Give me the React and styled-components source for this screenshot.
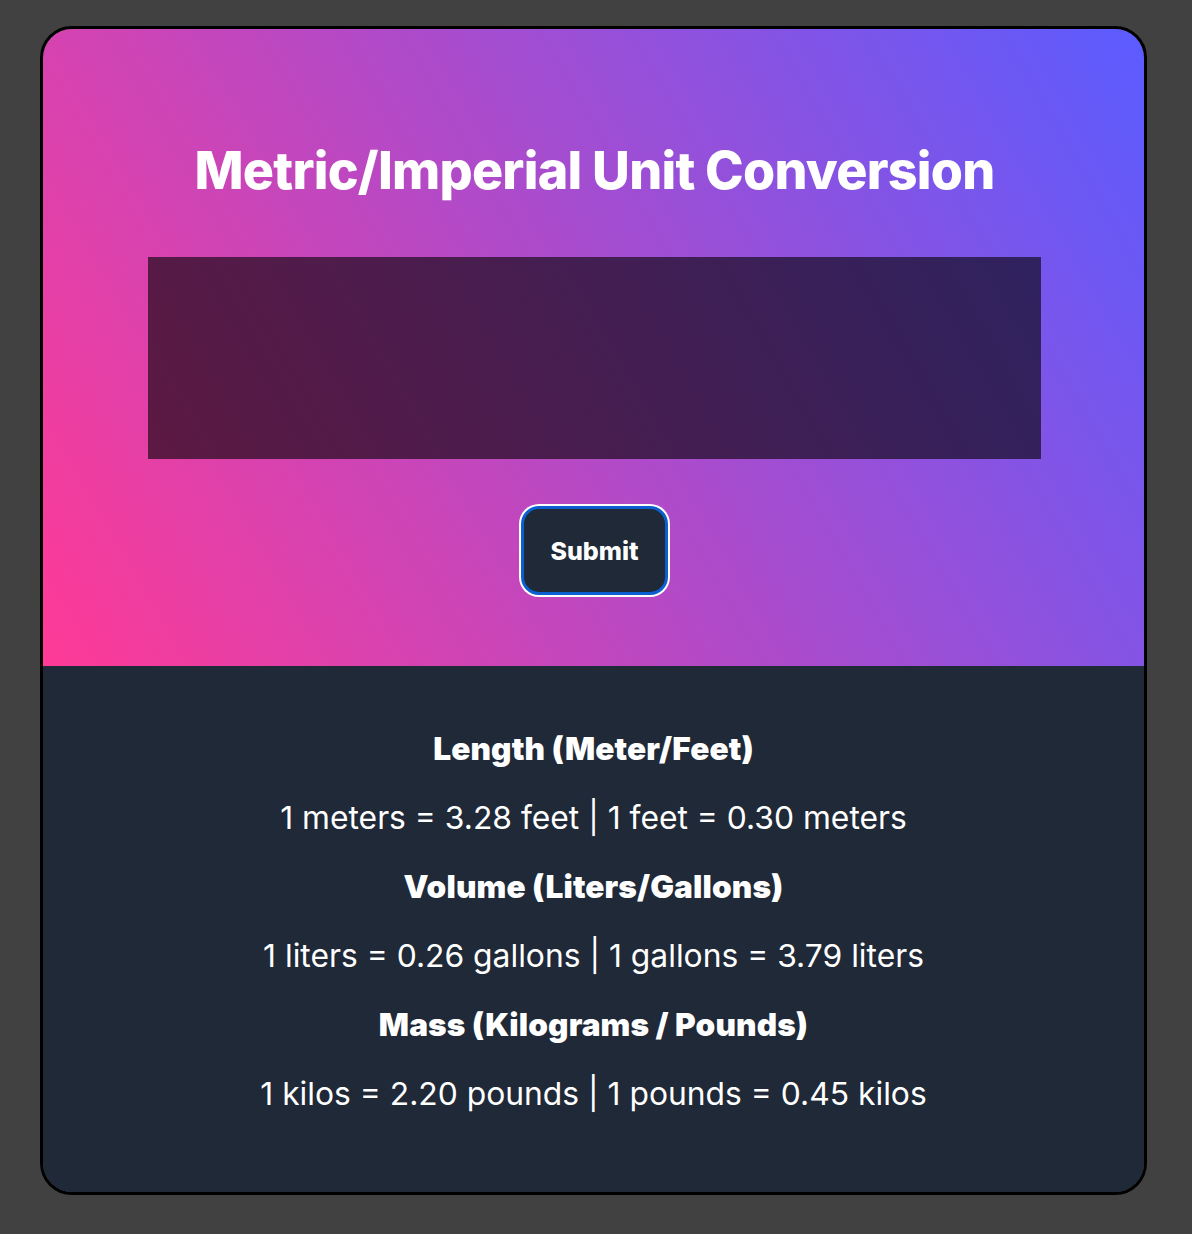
import React from "react";
import styled, { createGlobalStyle } from "styled-components";

const Global = createGlobalStyle`
  html, body { margin: 0; padding: 0; background: #414141; }
  body { font-family: Inter, "Noto Sans", sans-serif; }
  * { box-sizing: border-box; }
`;

const Page = styled.div`
  padding: 26px 45px 39px 40px;
  min-height: 1234px;
`;

const Card = styled.div`
  width: 1107px;
  border: 3px solid #000;
  border-radius: 32px;
  overflow: hidden;
  display: flex;
  flex-direction: column;
`;

const Top = styled.section`
  background: linear-gradient(60deg, #ff3a96 0%, #5b5cff 100%);
  display: flex;
  flex-direction: column;
  align-items: center;
  padding: 112px 103px 71px 105px;
  height: 637px;
`;

const Title = styled.h1`
  margin: 0;
  color: #fff;
  font-size: 52px;
  font-weight: 800;
  line-height: 60px;
  letter-spacing: -0.75px;
`;

const Field = styled.textarea`
  margin-top: 56px;
  width: 100%;
  height: 202px;
  border: none;
  outline: none;
  resize: none;
  background: rgba(0, 0, 0, 0.6);
  color: #fff;
  font-family: inherit;
  font-size: 24px;
`;

const Button = styled.button`
  margin-top: 47px;
  width: 147px;
  height: 89px;
  border-radius: 18px;
  background: #1f2937;
  border: 3px solid #0b5fd0;
  box-shadow: 0 0 0 2px #fff;
  color: #fff;
  font-family: inherit;
  font-size: 25px;
  font-weight: 800;
`;

const Bottom = styled.section`
  background: #1f2937;
  display: flex;
  flex-direction: column;
  align-items: center;
  padding: 48px 0 64px;
`;

const Heading = styled.h2`
  margin: 0;
  color: #fff;
  font-size: 31.6px;
  font-weight: 900;
  line-height: 69px;
  letter-spacing: 0.1px;
`;

const Line = styled.p`
  margin: 0;
  color: #fff;
  font-size: 31.8px;
  font-weight: 400;
  line-height: 69px;
`;

const rows = [
  ["Length (Meter/Feet)", "1 meters = 3.28 feet | 1 feet = 0.30 meters"],
  ["Volume (Liters/Gallons)", "1 liters = 0.26 gallons | 1 gallons = 3.79 liters"],
  ["Mass (Kilograms / Pounds)", "1 kilos = 2.20 pounds | 1 pounds = 0.45 kilos"],
];

export default function App() {
  return (
    <>
      <Global />
      <Page>
        <Card>
          <Top>
            <Title>Metric/Imperial Unit Conversion</Title>
            <Field />
            <Button>Submit</Button>
          </Top>
          <Bottom>
            {rows.map(([h, l]) => (
              <React.Fragment key={h}>
                <Heading>{h}</Heading>
                <Line>{l}</Line>
              </React.Fragment>
            ))}
          </Bottom>
        </Card>
      </Page>
    </>
  );
}
